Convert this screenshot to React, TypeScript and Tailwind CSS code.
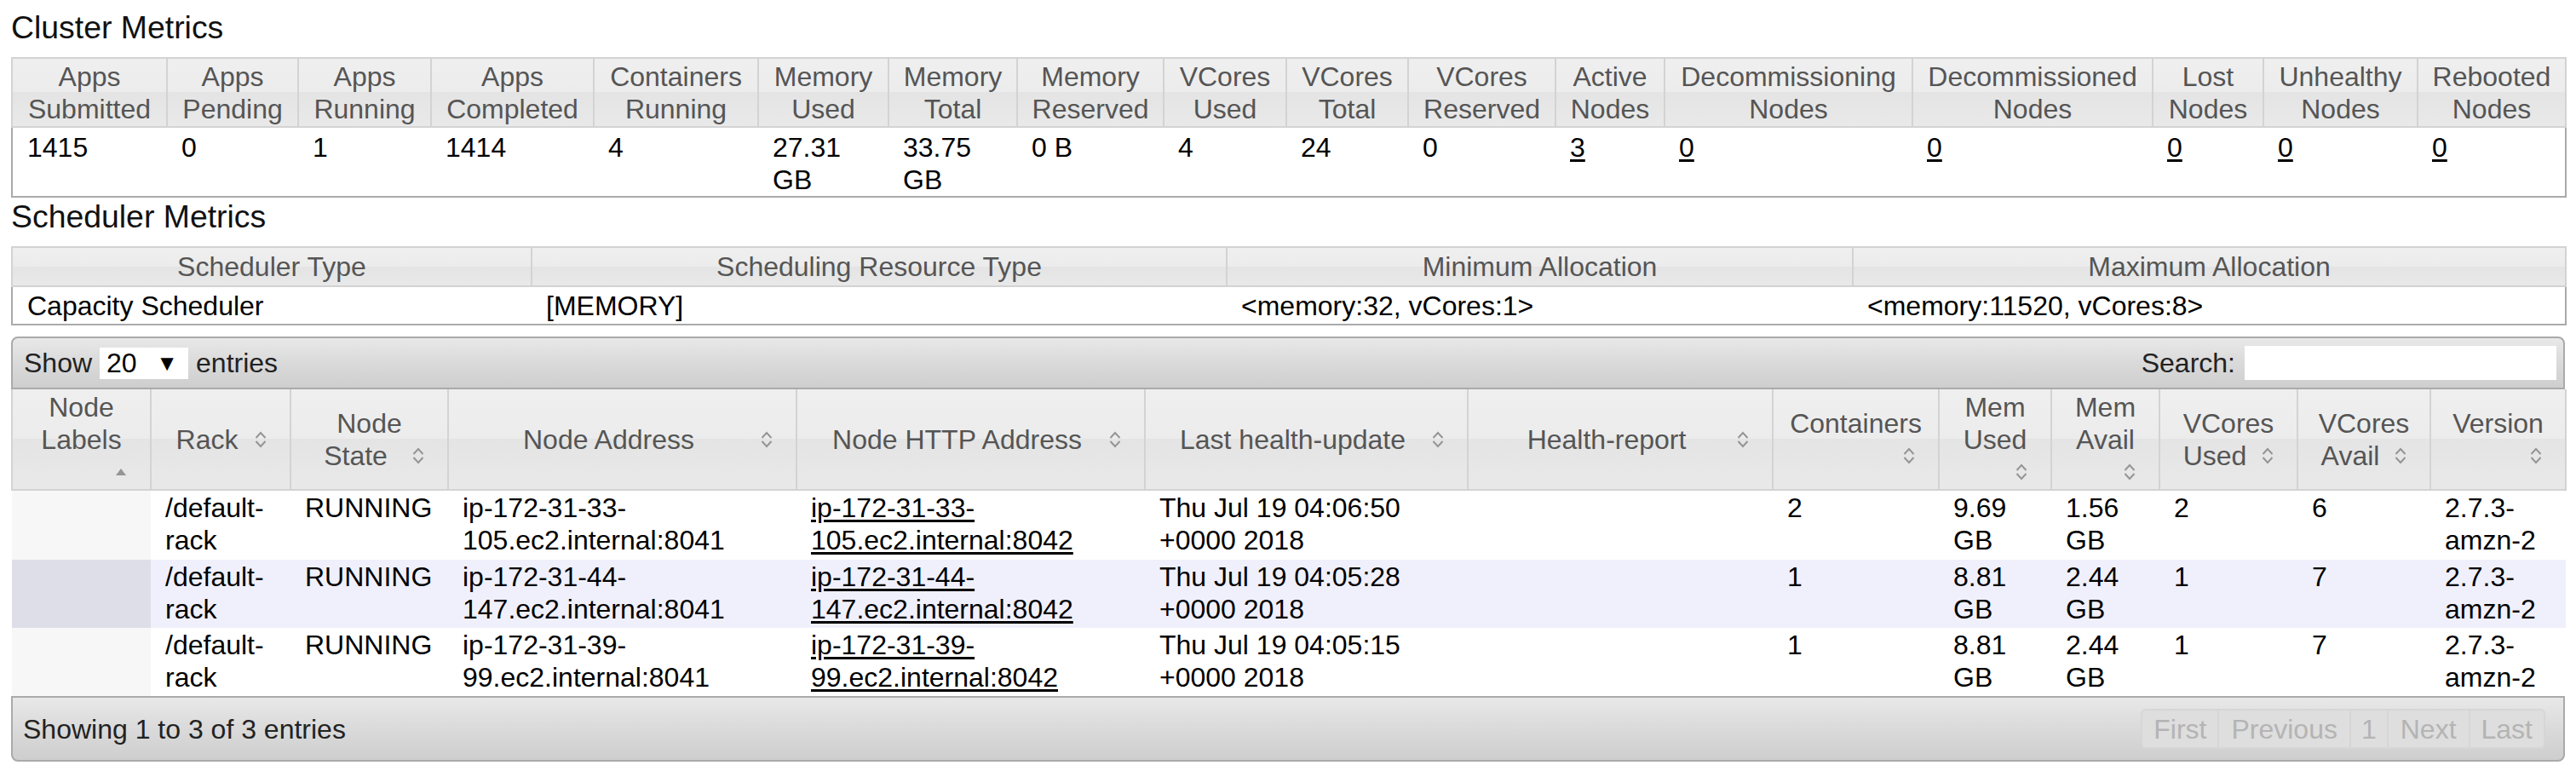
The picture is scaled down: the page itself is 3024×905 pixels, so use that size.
import React from "react";

const HEAD_BG =
  "bg-[linear-gradient(to_bottom,#efefef_0%,#ececec_50%,#e4e4e4_50%,#e9e9e9_100%)]";
const BAR_BG = "bg-[linear-gradient(to_bottom,#e8e8e8_0%,#dadada_50%,#cecece_100%)]";

function SortBoth() {
  return (
    <svg width="32" height="32" viewBox="0 0 32 32" className="shrink-0">
      <path d="M10.5 14 L16 8 L21.5 14" fill="none" stroke="#959595" strokeWidth="2" />
      <path d="M10.5 18 L16 24 L21.5 18" fill="none" stroke="#959595" strokeWidth="2" />
    </svg>
  );
}

function SortAsc() {
  return (
    <svg width="32" height="32" viewBox="0 0 32 32" className="shrink-0">
      <path d="M10 20 L16 12 L22 20 Z" fill="#959595" />
    </svg>
  );
}

type Cell = { lines: string[]; link?: boolean };

const clusterHead: { l: string[]; w: string }[] = [
  { l: ["Apps", "Submitted"], w: "w-[182px]" },
  { l: ["Apps", "Pending"], w: "w-[154px]" },
  { l: ["Apps", "Running"], w: "w-[156px]" },
  { l: ["Apps", "Completed"], w: "w-[191px]" },
  { l: ["Containers", "Running"], w: "w-[193px]" },
  { l: ["Memory", "Used"], w: "w-[153px]" },
  { l: ["Memory", "Total"], w: "w-[151px]" },
  { l: ["Memory", "Reserved"], w: "w-[172px]" },
  { l: ["VCores", "Used"], w: "w-[144px]" },
  { l: ["VCores", "Total"], w: "w-[143px]" },
  { l: ["VCores", "Reserved"], w: "w-[173px]" },
  { l: ["Active", "Nodes"], w: "w-[128px]" },
  { l: ["Decommissioning", "Nodes"], w: "w-[291px]" },
  { l: ["Decommissioned", "Nodes"], w: "w-[282px]" },
  { l: ["Lost", "Nodes"], w: "w-[130px]" },
  { l: ["Unhealthy", "Nodes"], w: "w-[181px]" },
  { l: ["Rebooted", "Nodes"], w: "w-[174px]" },
];

const clusterData: Cell[] = [
  { lines: ["1415"] },
  { lines: ["0"] },
  { lines: ["1"] },
  { lines: ["1414"] },
  { lines: ["4"] },
  { lines: ["27.31", "GB"] },
  { lines: ["33.75", "GB"] },
  { lines: ["0 B"] },
  { lines: ["4"] },
  { lines: ["24"] },
  { lines: ["0"] },
  { lines: ["3"], link: true },
  { lines: ["0"], link: true },
  { lines: ["0"], link: true },
  { lines: ["0"], link: true },
  { lines: ["0"], link: true },
  { lines: ["0"], link: true },
];

const schedHead: { l: string; w: string }[] = [
  { l: "Scheduler Type", w: "w-[610px]" },
  { l: "Scheduling Resource Type", w: "w-[816px]" },
  { l: "Minimum Allocation", w: "w-[735px]" },
  { l: "Maximum Allocation", w: "w-[837px]" },
];
const schedData = [
  "Capacity Scheduler",
  "[MEMORY]",
  "<memory:32, vCores:1>",
  "<memory:11520, vCores:8>",
];

type HLine = { t: string; icon?: "both" | "asc" };
const nodeHead: { lines: HLine[]; w: string }[] = [
  { lines: [{ t: "Node" }, { t: "Labels" }, { t: "", icon: "asc" }], w: "w-[163px]" },
  { lines: [{ t: "Rack", icon: "both" }], w: "w-[164px]" },
  { lines: [{ t: "Node" }, { t: "State", icon: "both" }], w: "w-[185px]" },
  { lines: [{ t: "Node Address", icon: "both" }], w: "w-[409px]" },
  { lines: [{ t: "Node HTTP Address", icon: "both" }], w: "w-[409px]" },
  { lines: [{ t: "Last health-update", icon: "both" }], w: "w-[379px]" },
  { lines: [{ t: "Health-report", icon: "both" }], w: "w-[358px]" },
  { lines: [{ t: "Containers" }, { t: "", icon: "both" }], w: "w-[195px]" },
  { lines: [{ t: "Mem" }, { t: "Used" }, { t: "", icon: "both" }], w: "w-[132px]" },
  { lines: [{ t: "Mem" }, { t: "Avail" }, { t: "", icon: "both" }], w: "w-[127px]" },
  { lines: [{ t: "VCores" }, { t: "Used", icon: "both" }], w: "w-[162px]" },
  { lines: [{ t: "VCores" }, { t: "Avail", icon: "both" }], w: "w-[156px]" },
  { lines: [{ t: "Version" }, { t: "", icon: "both" }], w: "w-[159px]" },
];

const nodeRows: { cells: Cell[]; h: string; bg: string; first: string }[] = [
  {
    h: "h-[82px]",
    bg: "bg-white",
    first: "bg-[#f7f7f7]",
    cells: [
      { lines: [""] },
      { lines: ["/default-", "rack"] },
      { lines: ["RUNNING"] },
      { lines: ["ip-172-31-33-", "105.ec2.internal:8041"] },
      { lines: ["ip-172-31-33-", "105.ec2.internal:8042"], link: true },
      { lines: ["Thu Jul 19 04:06:50", "+0000 2018"] },
      { lines: [""] },
      { lines: ["2"] },
      { lines: ["9.69", "GB"] },
      { lines: ["1.56", "GB"] },
      { lines: ["2"] },
      { lines: ["6"] },
      { lines: ["2.7.3-", "amzn-2"] },
    ],
  },
  {
    h: "h-[80px]",
    bg: "bg-[#f0f0fc]",
    first: "bg-[#dedee9]",
    cells: [
      { lines: [""] },
      { lines: ["/default-", "rack"] },
      { lines: ["RUNNING"] },
      { lines: ["ip-172-31-44-", "147.ec2.internal:8041"] },
      { lines: ["ip-172-31-44-", "147.ec2.internal:8042"], link: true },
      { lines: ["Thu Jul 19 04:05:28", "+0000 2018"] },
      { lines: [""] },
      { lines: ["1"] },
      { lines: ["8.81", "GB"] },
      { lines: ["2.44", "GB"] },
      { lines: ["1"] },
      { lines: ["7"] },
      { lines: ["2.7.3-", "amzn-2"] },
    ],
  },
  {
    h: "h-[80px]",
    bg: "bg-white",
    first: "bg-[#f7f7f7]",
    cells: [
      { lines: [""] },
      { lines: ["/default-", "rack"] },
      { lines: ["RUNNING"] },
      { lines: ["ip-172-31-39-", "99.ec2.internal:8041"] },
      { lines: ["ip-172-31-39-", "99.ec2.internal:8042"], link: true },
      { lines: ["Thu Jul 19 04:05:15", "+0000 2018"] },
      { lines: [""] },
      { lines: ["1"] },
      { lines: ["8.81", "GB"] },
      { lines: ["2.44", "GB"] },
      { lines: ["1"] },
      { lines: ["7"] },
      { lines: ["2.7.3-", "amzn-2"] },
    ],
  },
];

function CellText({ c }: { c: Cell }) {
  const content = c.lines.map((ln, i) => (
    <React.Fragment key={i}>
      {i > 0 && <br />}
      {ln}
    </React.Fragment>
  ));
  if (c.link) return <a className="text-black underline underline-offset-[3px]">{content}</a>;
  return <>{content}</>;
}

export default function App() {
  return (
    <div className="font-['Liberation_Sans',Arial,sans-serif] bg-white min-h-[905px] px-[13px] text-[32px] leading-[38px] text-black">
      <h3 className="text-[37.4px] leading-[43px] pt-[11px] pb-[13px] text-[#111]">Cluster Metrics</h3>
      <table className="w-full table-fixed border-collapse border-2 border-[#aaaaaa]">
        <colgroup>
          {clusterHead.map((h, i) => (
            <col key={i} className={h.w} />
          ))}
        </colgroup>
        <thead>
          <tr className="h-[81px]">
            {clusterHead.map((h, i) => (
              <th
                key={i}
                className={`border-2 border-[#d3d3d3] ${HEAD_BG} px-[4px] font-normal text-[#555] text-center align-middle`}
              >
                {h.l[0]}
                <br />
                {h.l[1]}
              </th>
            ))}
          </tr>
        </thead>
        <tbody>
          <tr className="h-[82px]">
            {clusterData.map((c, i) => (
              <td key={i} className="px-[17px] pt-[4px] align-top">
                <CellText c={c} />
              </td>
            ))}
          </tr>
        </tbody>
      </table>

      <h3 className="text-[37.4px] leading-[43px] pt-[1px] pb-[13px] text-[#111]">Scheduler Metrics</h3>
      <table className="w-full table-fixed border-collapse border-2 border-[#aaaaaa]">
        <colgroup>
          {schedHead.map((h, i) => (
            <col key={i} className={h.w} />
          ))}
        </colgroup>
        <thead>
          <tr className="h-[46px]">
            {schedHead.map((h, i) => (
              <th
                key={i}
                className={`border-2 border-[#d3d3d3] ${HEAD_BG} px-[4px] font-normal text-[#555] text-center align-middle`}
              >
                {h.l}
              </th>
            ))}
          </tr>
        </thead>
        <tbody>
          <tr className="h-[45px]">
            {schedData.map((t, i) => (
              <td key={i} className="px-[17px] align-middle">
                {t}
              </td>
            ))}
          </tr>
        </tbody>
      </table>

      <div className="mt-[13px]">
        <div
          className={`flex h-[62px] items-center justify-between rounded-t-[8px] border-2 border-[#aaaaaa] ${BAR_BG} pl-[13px] pr-[8px] text-[#222]`}
        >
          <div className="flex items-center">
            <span>Show</span>
            <div className="ml-[9px] flex h-[37px] w-[104px] items-center justify-between bg-white pl-[8px] pr-[12px] text-black">
              <span>20</span>
              <span className="text-[26px] leading-[26px]">▼</span>
            </div>
            <span className="ml-[9px]">entries</span>
          </div>
          <div className="flex items-center">
            <span>Search:</span>
            <div className="ml-[11px] h-[40px] w-[366px] bg-white" />
          </div>
        </div>

        <table className="w-full table-fixed border-collapse">
          <colgroup>
            {nodeHead.map((h, i) => (
              <col key={i} className={h.w} />
            ))}
          </colgroup>
          <thead>
            <tr className="h-[118px]">
              {nodeHead.map((h, i) => (
                <th
                  key={i}
                  className={`border-2 border-t-0 border-[#d3d3d3] ${HEAD_BG} px-[18px] font-normal text-[#555] align-middle`}
                >
                  <div className="flex flex-col">
                    {h.lines.map((ln, j) => (
                      <div key={j} className="flex h-[38px] items-center">
                        <span className="flex-1 whitespace-nowrap text-center">{ln.t}</span>
                        {ln.icon === "both" && <SortBoth />}
                        {ln.icon === "asc" && <SortAsc />}
                      </div>
                    ))}
                  </div>
                </th>
              ))}
            </tr>
          </thead>
          <tbody>
            {nodeRows.map((r, ri) => (
              <tr key={ri} className={`${r.h} ${r.bg}`}>
                {r.cells.map((c, ci) => (
                  <td
                    key={ci}
                    className={`px-[17px] pt-[1px] align-top ${ci === 0 ? r.first : ""}`}
                  >
                    <CellText c={c} />
                  </td>
                ))}
              </tr>
            ))}
          </tbody>
        </table>

        <div
          className={`flex h-[77px] items-center justify-between rounded-b-[8px] border-2 border-[#aaaaaa] ${BAR_BG} pl-[12px] pr-[21px] text-[#222]`}
        >
          <span>Showing 1 to 3 of 3 entries</span>
          <div className="flex h-[47px] items-stretch rounded-[6px] text-[#b4b4b4]">
            <span className="flex items-center rounded-l-[6px] border-2 border-[#d6d6d6] bg-[#dedede] px-[13px]">First</span>
            <span className="flex items-center border-2 border-l-0 border-[#d6d6d6] bg-[#dedede] px-[14px]">Previous</span>
            <span className="flex items-center border-2 border-l-0 border-[#d6d6d6] bg-[#dedede] px-[12px]">1</span>
            <span className="flex items-center border-2 border-l-0 border-[#d6d6d6] bg-[#dedede] px-[14px]">Next</span>
            <span className="flex items-center rounded-r-[6px] border-2 border-l-0 border-[#d6d6d6] bg-[#dedede] px-[13px]">Last</span>
          </div>
        </div>
      </div>
    </div>
  );
}
